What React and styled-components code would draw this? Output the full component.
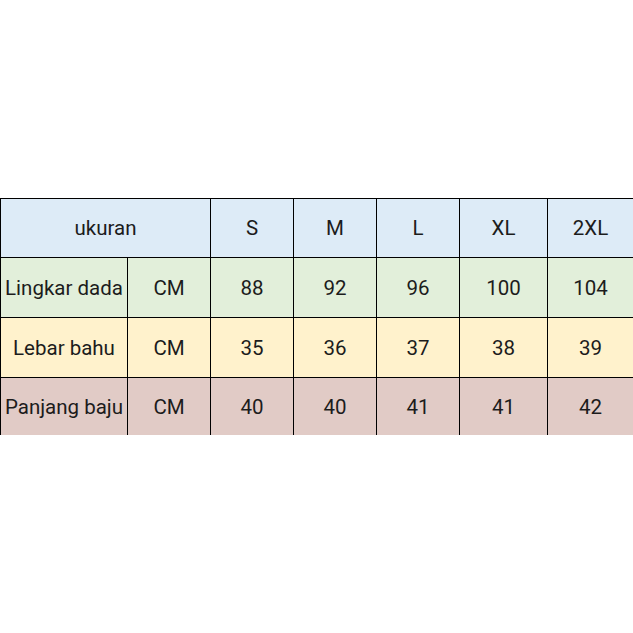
import styled, { createGlobalStyle } from 'styled-components'

const GlobalStyle = createGlobalStyle`
  html, body {
    margin: 0;
    padding: 0;
    background: #ffffff;
  }
  body {
    font-family: Roboto, "Noto Sans", "Liberation Sans", sans-serif;
    color: #1c1c1c;
  }
`

const Page = styled.div`
  width: 633px;
  height: 633px;
  padding-top: 198px;
  box-sizing: border-box;
  overflow: hidden;
`

const Grid = styled.div`
  display: grid;
  grid-template-columns: 127px 83px 83px 83px 83px 88px 1fr;
  grid-template-rows: 59px 60px 60px 57px;
  border-top: 1px solid #000;
  border-left: 1px solid #000;
  width: 632px;
`

const Cell = styled.div`
  box-sizing: border-box;
  display: flex;
  align-items: center;
  justify-content: center;
  white-space: nowrap;
  font-size: 20.5px;
  background: ${(p) => p.$bg};
  border-right: ${(p) => (p.$end ? 'none' : '1px solid #000')};
  border-bottom: ${(p) => (p.$last ? 'none' : '1px solid #000')};
  grid-column: ${(p) => (p.$span ? `span ${p.$span}` : 'auto')};
`

const colors = {
  head: '#ddebf7',
  green: '#e2efda',
  yellow: '#fff2cc',
  pink: '#e1cbc6',
}

const sizes = ['S', 'M', 'L', 'XL', '2XL']

const rows = [
  { label: 'Lingkar dada', bg: colors.green, values: [88, 92, 96, 100, 104] },
  { label: 'Lebar bahu', bg: colors.yellow, values: [35, 36, 37, 38, 39] },
  { label: 'Panjang baju', bg: colors.pink, values: [40, 40, 41, 41, 42] },
]

export default function App() {
  return (
    <>
      <GlobalStyle />
      <Page>
        <Grid>
          <Cell $bg={colors.head} $span={2}>ukuran</Cell>
          {sizes.map((s, j) => (
            <Cell key={s} $bg={colors.head} $end={j === sizes.length - 1}>
              {s}
            </Cell>
          ))}
          {rows.map((r, i) => {
            const last = i === rows.length - 1
            return [
              <Cell key={r.label} $bg={r.bg} $last={last}>{r.label}</Cell>,
              <Cell key={r.label + 'cm'} $bg={r.bg} $last={last}>CM</Cell>,
              ...r.values.map((v, j) => (
                <Cell
                  key={r.label + j}
                  $bg={r.bg}
                  $last={last}
                  $end={j === r.values.length - 1}
                >
                  {v}
                </Cell>
              )),
            ]
          })}
        </Grid>
      </Page>
    </>
  )
}
